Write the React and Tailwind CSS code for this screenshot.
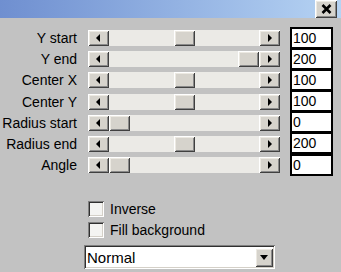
import React from 'react';

const raised = 'bg-[#d6d3cc] shadow-[inset_1px_1px_0_#ffffff,inset_-1px_-1px_0_#404040,inset_2px_2px_0_#ece9e2,inset_-2px_-2px_0_#8a8a8a]';
const sunken = 'shadow-[inset_1px_1px_0_#808080,inset_-1px_-1px_0_#ffffff,inset_2px_2px_0_#303030,inset_-2px_-2px_0_#d4d0c8]';

const rows = [
    { label: 'Y start', value: 100, max: 200 },
    { label: 'Y end', value: 200, max: 200 },
    { label: 'Center X', value: 100, max: 200 },
    { label: 'Center Y', value: 100, max: 200 },
    { label: 'Radius start', value: 0, max: 400 },
    { label: 'Radius end', value: 200, max: 400 },
    { label: 'Angle', value: 0, max: 360 },
];

const Arrow = ({ dir }) => (
    <svg width="5" height="8" viewBox="0 0 5 8">
        {dir === 'left'
            ? <path d="M4 0 L4 8 L0 4 Z" fill="#000" />
            : <path d="M1 0 L1 8 L5 4 Z" fill="#000" />}
    </svg>
);

const ScrollBar = ({ value, max }) => {
    // track is 150px, thumb 21px
    const left = Math.round((value / max) * 129);
    return (
        <div className="flex h-[16px] w-[192px]">
            <div className={`w-[21px] h-full flex items-center justify-center ${raised}`}>
                <Arrow dir="left" />
            </div>
            <div className="relative flex-1 h-full bg-[#ebeae6]">
                <div className={`absolute top-0 w-[21px] h-full ${raised}`} style={{ left }} />
            </div>
            <div className={`w-[21px] h-full flex items-center justify-center ${raised}`}>
                <Arrow dir="right" />
            </div>
        </div>
    );
};

const Checkbox = ({ label }) => (
    <div className="flex items-center h-[21px]">
        <div className={`w-[16px] h-[16px] bg-[#f4f4f2] ${sunken}`} />
        <span className="ml-[6px] text-[14px] text-black leading-none">{label}</span>
    </div>
);

export default function App() {
    return (
        <div className="w-[341px] h-[272px] overflow-hidden bg-[#c2c2c2] font-['Liberation_Sans',Arial,sans-serif]">
            <div className="h-[18px] flex justify-end bg-gradient-to-r from-[#6f8fd0] to-[#b6d3f3]">
                <div className={`w-[22px] h-[18px] mr-[4px] flex items-center justify-center ${raised}`}>
                    <svg width="11" height="10" viewBox="0 0 11 10">
                        <path d="M1.5 1 L9.5 9 M9.5 1 L1.5 9" stroke="#000" strokeWidth="2.6" />
                    </svg>
                </div>
            </div>

            <div className="pt-[9.4px]">
                {rows.map((r, i) => (
                    <div key={r.label} className="flex items-center h-[21.2px]">
                        <div className="w-[77px] text-right text-[14px] text-black leading-none whitespace-nowrap">{r.label}</div>
                        <div className="ml-[11px]">
                            <ScrollBar value={r.value} max={r.max} />
                        </div>
                        <div className={`ml-[10px] w-[43px] h-[22px] bg-white border-2 border-black pl-[1px] text-[14px] leading-[18px] text-black ${i > 0 ? '-mt-[1px]' : ''}`}>
                            {r.value}
                        </div>
                    </div>
                ))}
            </div>

            <div className="mt-[22.7px] pl-[88px]">
                <Checkbox label="Inverse" />
                <Checkbox label="Fill background" />
            </div>

            <div className={`mt-[5px] ml-[84px] w-[191px] h-[24px] bg-white flex items-center justify-between pl-[3px] pr-[2px] ${sunken}`}>
                <span className="text-[15px] text-black leading-none">Normal</span>
                <div className={`w-[18px] h-[19px] flex items-center justify-center ${raised}`}>
                    <svg width="8" height="5" viewBox="0 0 8 5">
                        <path d="M0 0 L8 0 L4 5 Z" fill="#000" />
                    </svg>
                </div>
            </div>
        </div>
    );
}
